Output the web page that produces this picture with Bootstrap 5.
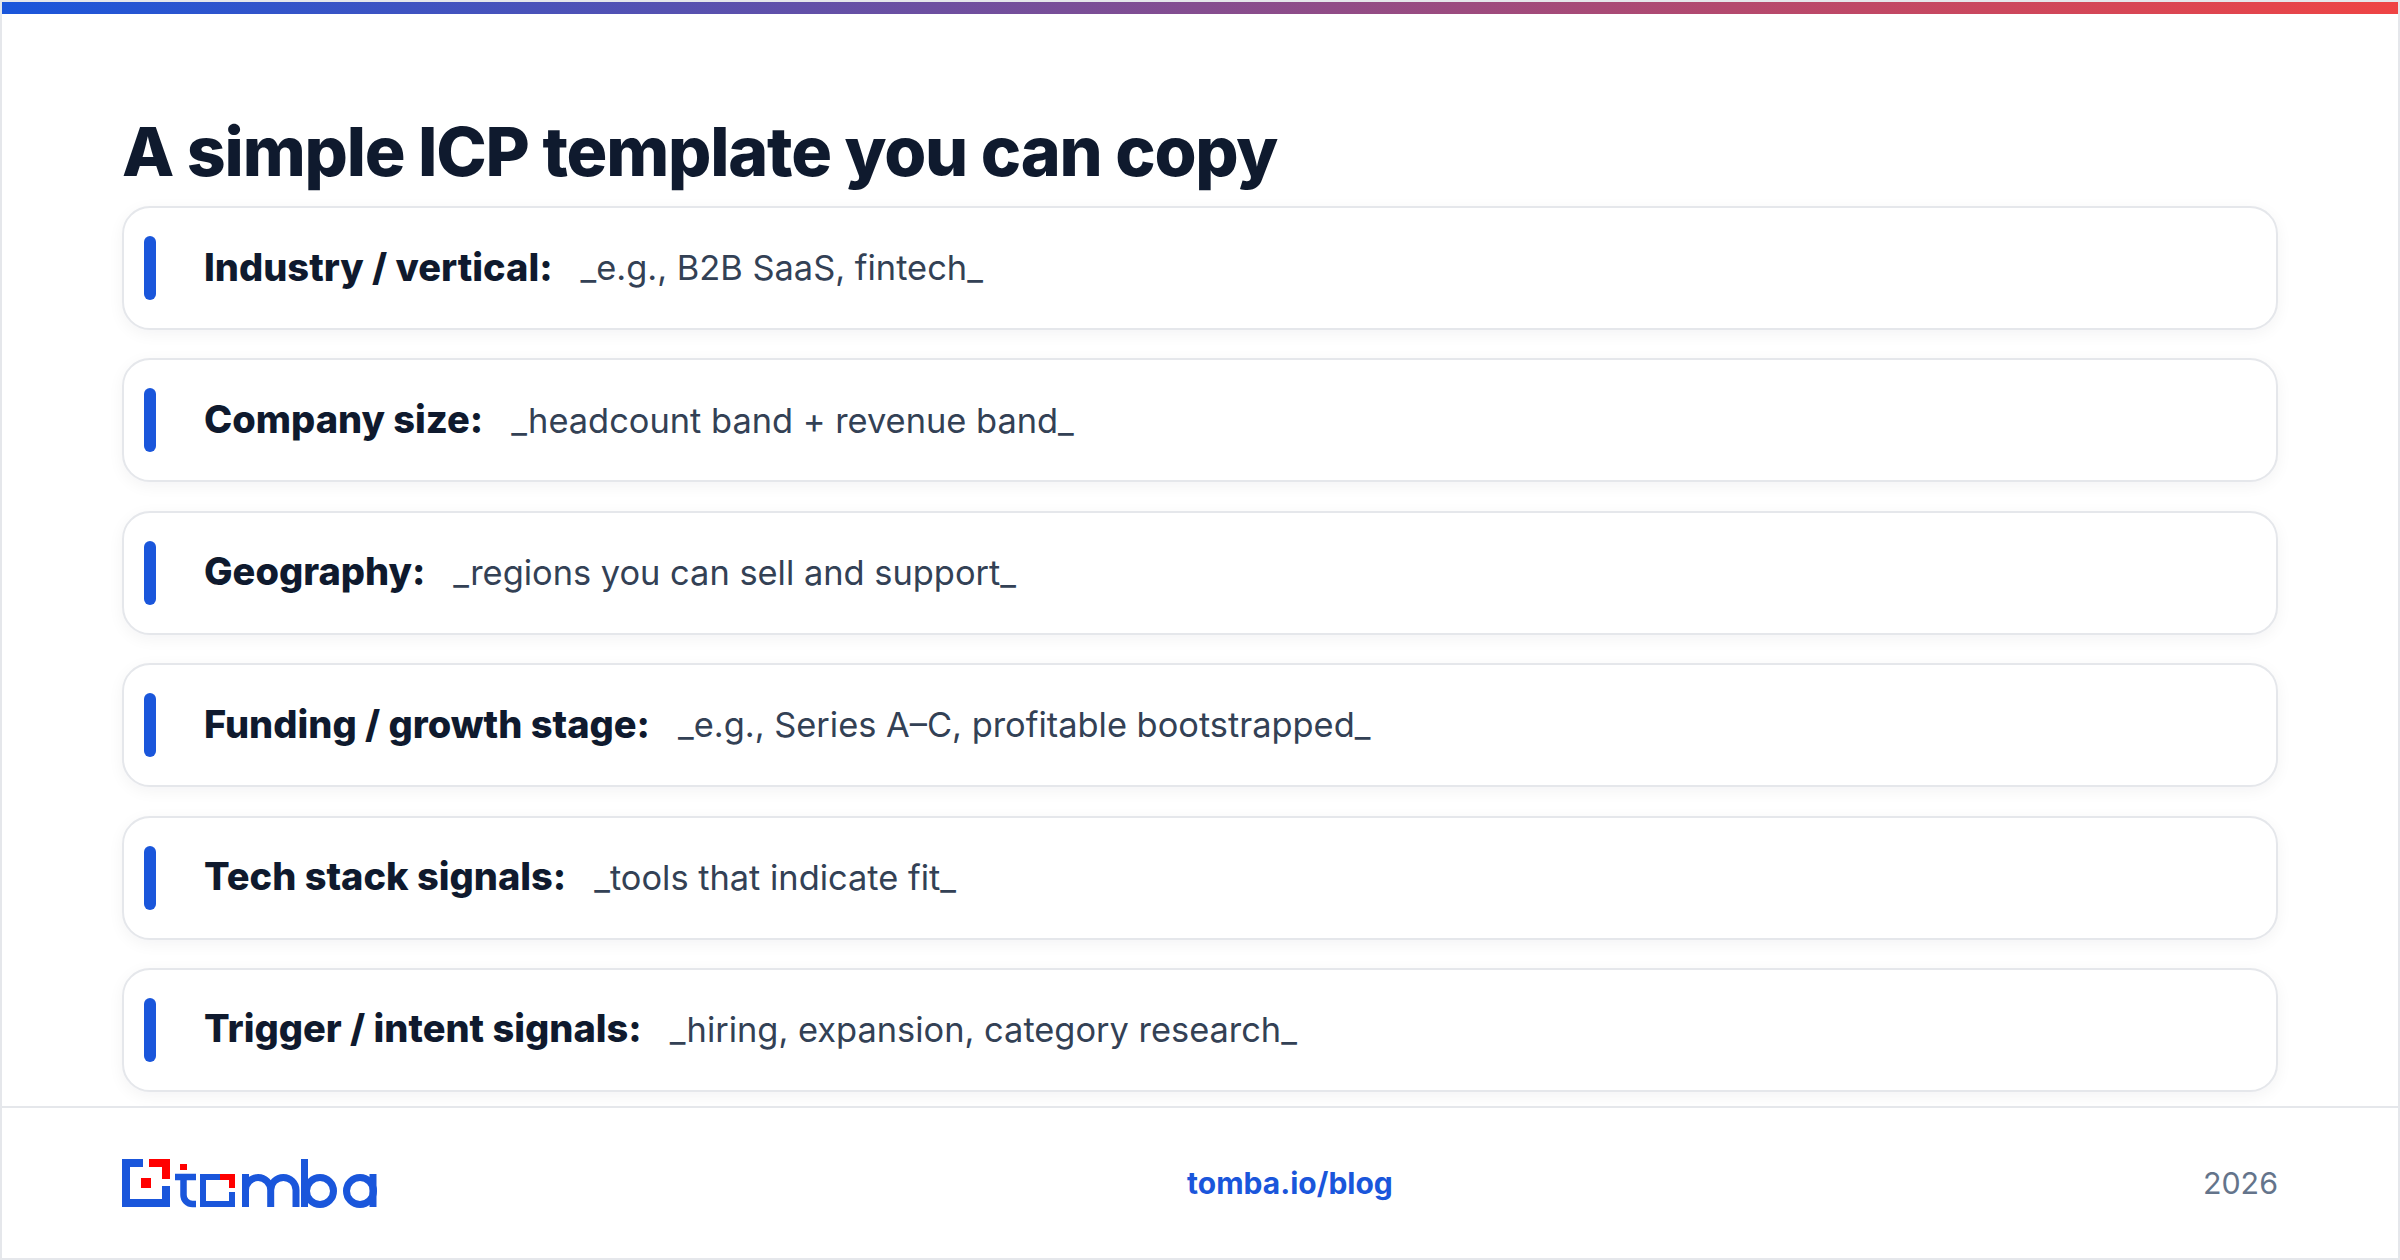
<!DOCTYPE html>
<html lang="en">
<head>
    <meta charset="UTF-8">
    <meta name="viewport" content="width=device-width, initial-scale=1.0">
    <title>A simple ICP template you can copy</title>
    <link rel="stylesheet" href="https://cdn.jsdelivr.net/npm/bootstrap@5.3.0/dist/css/bootstrap.min.css">
    <style>
        html, body { height: 100%; }
        body { background: #fff; font-family: "Inter", "Liberation Sans", sans-serif; color: #0f1a2e; }
        .slide { width: 2400px; height: 1260px; border: 2px solid #e5e7eb; }
        .top-stripe { height: 12px; background: linear-gradient(90deg, #1a56db, #ef4444); }
        .slide-body { padding: 98px 120px 0; flex: 1 1 auto; min-height: 0; }
        .slide-title { font-size: 68px; font-weight: 800; letter-spacing: -1.2px; line-height: 78px; color: #0f1a2e; margin: 0 0 16px; }
        .rows-wrap { gap: 28.4px; }
        .icp-row { height: 124px; border: 2px solid #e5e7eb; border-radius: 28px; box-shadow: 0 4px 16px rgba(15,26,46,.05); padding: 0 20px; background: #fff; }
        .icp-bar { width: 12px; height: 64px; border-radius: 6px; background: #1a56db; margin-right: 48px; }
        .icp-label { font-size: 38px; font-weight: 800; color: #0f1a2e; margin-right: 28px; padding-bottom: 2px; }
        .icp-value { font-size: 34.4px; font-weight: 400; color: #334155; }
        .slide-foot { height: 152px; border-top: 2px solid #e5e7eb; padding: 0 120px; }
        .foot-link { font-size: 30px; font-weight: 700; color: #1a56db; text-decoration: none; }
        .foot-year { font-size: 30.4px; color: #64748b; padding-top: 2px; }
    </style>
</head>
<body class="m-0">
<div class="slide d-flex flex-column">
    <div class="top-stripe"></div>
    <div class="slide-body">
        <h1 class="slide-title">A simple ICP template you can copy</h1>
        <div class="rows-wrap d-flex flex-column">
            <div class="icp-row d-flex align-items-center"><span class="icp-bar"></span><span class="icp-label">Industry / vertical:</span><span class="icp-value">_e.g., B2B SaaS, fintech_</span></div>
            <div class="icp-row d-flex align-items-center"><span class="icp-bar"></span><span class="icp-label">Company size:</span><span class="icp-value">_headcount band + revenue band_</span></div>
            <div class="icp-row d-flex align-items-center"><span class="icp-bar"></span><span class="icp-label">Geography:</span><span class="icp-value">_regions you can sell and support_</span></div>
            <div class="icp-row d-flex align-items-center"><span class="icp-bar"></span><span class="icp-label">Funding / growth stage:</span><span class="icp-value">_e.g., Series A–C, profitable bootstrapped_</span></div>
            <div class="icp-row d-flex align-items-center"><span class="icp-bar"></span><span class="icp-label">Tech stack signals:</span><span class="icp-value">_tools that indicate fit_</span></div>
            <div class="icp-row d-flex align-items-center"><span class="icp-bar"></span><span class="icp-label">Trigger / intent signals:</span><span class="icp-value">_hiring, expansion, category research_</span></div>
        </div>
    </div>
    <div class="slide-foot d-flex align-items-center justify-content-between">
        <svg width="255" height="49" viewBox="0 0 255 49" role="img" aria-label="tomba">
            <g fill="#1a56db">
                <path d="M0 0H21V8H8V40H40V27H48V48H0Z"/>
                <path d="M98 15H78V48H113V33H107V42H84V21H98Z"/>
            </g>
            <g fill="#f00">
                <path d="M27 0H48V20H40V8H27Z"/>
                <path d="M19 19h10v10H19z"/>
                <path d="M58 5h7v6h-7z"/>
                <path d="M98 15H113V29H107V21H98Z"/>
            </g>
            <g fill="none" stroke="#1a56db" stroke-width="7">
                <path d="M53 18H74M61.5 15V36a9 9 0 0 0 9 9H74" stroke-width="6.5"/>
                <path d="M123.5 48V15M123.5 31a12.6 12.5 0 0 1 25.2 0V48M148.7 31a12.6 12.5 0 0 1 25.3 0V48"/>
                <path d="M182.5 0V48"/>
                <circle cx="198" cy="32" r="13.5"/>
                <circle cx="238" cy="32" r="13.5"/>
                <path d="M251 15V48"/>
            </g>
        </svg>
        <a class="foot-link" href="#">tomba.io/blog</a>
        <div class="foot-year">2026</div>
    </div>
</div>
<script src="https://cdn.jsdelivr.net/npm/bootstrap@5.3.0/dist/js/bootstrap.bundle.min.js"></script>
</body>
</html>
